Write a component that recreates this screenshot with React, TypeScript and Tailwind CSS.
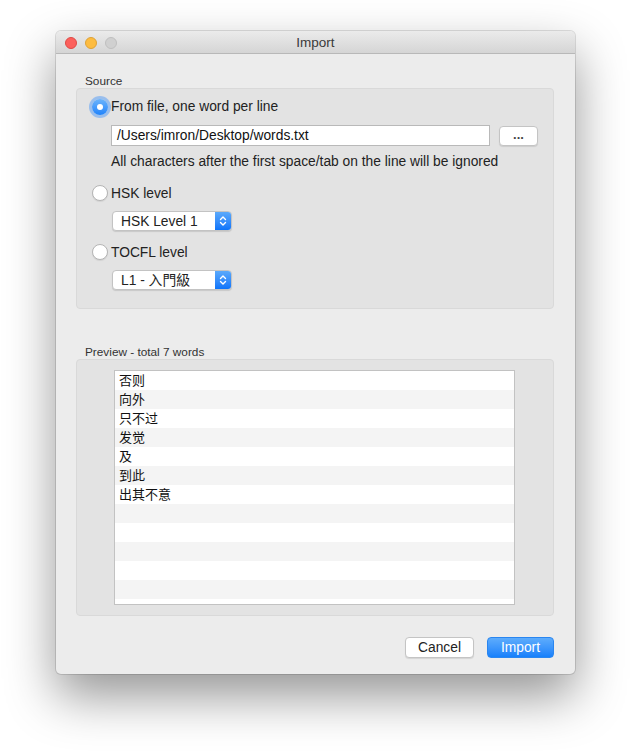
import React from "react";

const FONT = "font-['Liberation_Sans','Noto_Sans_CJK_SC',sans-serif]";

function Radio({ checked }: { checked?: boolean }) {
  if (checked) {
    return (
      <div className="w-4 h-4 rounded-full bg-gradient-to-b from-[#6cb4fb] to-[#1d83fb] flex items-center justify-center shadow-[0_0_0_3px_rgba(92,160,245,0.55)] shrink-0">
        <div className="w-[6px] h-[6px] rounded-full bg-white" />
      </div>
    );
  }
  return (
    <div className="w-4 h-4 rounded-full bg-white border border-[#b4b4b4] shadow-[0_1px_1px_rgba(0,0,0,0.08)] shrink-0" />
  );
}

function Select({ label }: { label: string }) {
  return (
    <div className="w-[120px] h-5 flex rounded-[4px] bg-white border border-[#c3c3c3] shadow-[0_1px_1px_rgba(0,0,0,0.12)] overflow-hidden">
      <div className="flex-1 pl-2 pt-[1px] text-[13.8px] leading-[18px] text-[#222]">{label}</div>
      <div className="w-4 h-full bg-gradient-to-b from-[#5aa9fb] to-[#0b74fa] flex items-center justify-center">
        <svg width="8" height="12" viewBox="0 0 8 12" fill="none" stroke="white" strokeWidth="1.4" strokeLinecap="round" strokeLinejoin="round">
          <path d="M1.5 4.5 L4 2 L6.5 4.5" />
          <path d="M1.5 7.5 L4 10 L6.5 7.5" />
        </svg>
      </div>
    </div>
  );
}

const words = ["否则", "向外", "只不过", "发觉", "及", "到此", "出其不意"];

export default function App() {
  const rows = Array.from({ length: 13 }, (_, i) => words[i] ?? "");
  return (
    <div className={`w-[631px] h-[755px] bg-white pt-[31px] pl-[56px] ${FONT}`}>
      <div className="w-[519px] h-[643px] bg-[#ececec] rounded-[5px] shadow-[0_22px_50px_rgba(0,0,0,0.42),0_0_0_1px_rgba(0,0,0,0.12)] flex flex-col overflow-hidden">
        {/* Title bar */}
        <div className="h-[23px] shrink-0 relative bg-gradient-to-b from-[#ebebeb] to-[#d5d5d5] border-b border-[#b8b8b8] flex items-center justify-center">
          <div className="absolute left-[9px] top-[6px] flex gap-2">
            <div className="w-3 h-3 rounded-full bg-[#fc605c] border border-[#de4a45]" />
            <div className="w-3 h-3 rounded-full bg-[#fdbc40] border border-[#dea236]" />
            <div className="w-3 h-3 rounded-full bg-[#d0d0d0] border border-[#bfbfbf]" />
          </div>
          <span className="text-[13.5px] leading-[16px] pt-[2px] text-[#3a3a3a]">Import</span>
        </div>

        {/* Content */}
        <div className="flex-1 flex flex-col pl-5 pr-[21px] pt-[20px]">
          <div className="h-[14px] pl-[9px] text-[11.8px] leading-[14px] text-[#333]">Source</div>
          <div className="h-[221px] bg-[#e3e3e3] border border-[#d9d9d9] rounded-[4px] pl-[15px] pt-[10px]">
            <div className="h-4 flex items-center gap-[3px]">
              <Radio checked />
              <span className="text-[13.8px] leading-4 text-[#222]">From file, one word per line</span>
            </div>
            <div className="mt-[10px] pl-[19px] flex items-center">
              <div className="w-[379px] h-[21px] bg-white border border-[#b9b9b9] pl-[5px] text-[13.8px] leading-[19px] text-[#111]">
                /Users/imron/Desktop/words.txt
              </div>
              <div className="ml-[9px] w-[39px] h-5 bg-white border border-[#c4c4c4] rounded-[4px] shadow-[0_1px_1px_rgba(0,0,0,0.1)] flex items-center justify-center text-[13px] font-bold leading-none text-[#444] pb-[3px]">
                ...
              </div>
            </div>
            <div className="mt-[8px] pl-[19px] h-4 text-[13.8px] leading-4 text-[#222]">
              All characters after the first space/tab on the line will be ignored
            </div>
            <div className="mt-[15px] h-4 flex items-center gap-[3px]">
              <Radio />
              <span className="text-[13.8px] leading-4 pt-[1px] text-[#222]">HSK level</span>
            </div>
            <div className="mt-[10px] pl-5">
              <Select label="HSK Level 1" />
            </div>
            <div className="mt-[13px] h-4 flex items-center gap-[3px]">
              <Radio />
              <span className="text-[13.8px] leading-4 pt-[1px] text-[#222]">TOCFL level</span>
            </div>
            <div className="mt-[10px] pl-5">
              <Select label="L1 - 入門級" />
            </div>
          </div>

          <div className="mt-9 h-[14px] pl-[9px] text-[11.8px] leading-[14px] text-[#333]">Preview - total 7 words</div>
          <div className="h-[257px] bg-[#e3e3e3] border border-[#d9d9d9] rounded-[4px] pl-[37px] pr-[38px] pt-[10px]">
            <div className="h-[235px] bg-white border border-[#c2c2c2] overflow-hidden">
              {rows.map((w, i) => (
                <div
                  key={i}
                  className={`h-[19px] pl-1 text-[13px] leading-[19px] text-[#111] ${i % 2 === 1 ? "bg-[#f4f4f4]" : "bg-white"}`}
                >
                  {w}
                </div>
              ))}
            </div>
          </div>

          <div className="mt-[21px] flex justify-end gap-[13px]">
            <div className="w-[69px] h-[21px] bg-white border border-[#c4c4c4] rounded-[4px] shadow-[0_1px_1px_rgba(0,0,0,0.1)] flex items-center justify-center pt-[1px] text-[13.8px] text-[#222]">
              Cancel
            </div>
            <div className="w-[67px] h-[21px] bg-gradient-to-b from-[#5dacfc] to-[#1580fb] border border-[#2a86f0] rounded-[4px] flex items-center justify-center pt-[1px] text-[13.8px] text-white">
              Import
            </div>
          </div>
        </div>
      </div>
    </div>
  );
}
